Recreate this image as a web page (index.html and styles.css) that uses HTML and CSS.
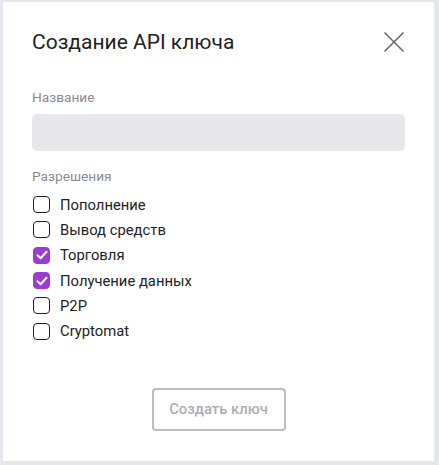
FILE: index.html
```html
<!DOCTYPE html>
<html lang="ru">
<head>
<meta charset="utf-8">
<title>Создание API ключа</title>
<link rel="stylesheet" href="styles.css">
</head>
<body>
<div class="modal">
  <div class="header">
    <h1 class="title">Создание API ключа</h1>
    <button class="close" aria-label="Закрыть">
      <svg width="22" height="22" viewBox="0 0 22 22"><path d="M1.5 1.5L20.5 20.5M20.5 1.5L1.5 20.5" stroke="#6a6a6a" stroke-width="1.6" fill="none"/></svg>
    </button>
  </div>
  <div class="field">
    <div class="label">Название</div>
    <div class="input"></div>
  </div>
  <div class="perms">
    <div class="label">Разрешения</div>
    <ul class="list">
      <li class="item"><span class="box"></span>Пополнение</li>
      <li class="item"><span class="box"></span>Вывод средств</li>
      <li class="item"><span class="box checked"><svg width="12" height="10" viewBox="0 0 12 10"><path d="M1.5 5.2L4.6 8.2L10.5 1.8" stroke="#fff" stroke-width="2" fill="none" stroke-linecap="round" stroke-linejoin="round"/></svg></span>Торговля</li>
      <li class="item"><span class="box checked"><svg width="12" height="10" viewBox="0 0 12 10"><path d="M1.5 5.2L4.6 8.2L10.5 1.8" stroke="#fff" stroke-width="2" fill="none" stroke-linecap="round" stroke-linejoin="round"/></svg></span>Получение данных</li>
      <li class="item"><span class="box"></span>P2P</li>
      <li class="item"><span class="box"></span>Cryptomat</li>
    </ul>
  </div>
  <div class="footer">
    <button class="submit">Создать ключ</button>
  </div>
</div>
</body>
</html>
```
FILE: styles.css
```css
html, body {
  margin: 0;
  padding: 0;
}
body {
  background: #e6e6ee;
  font-family: Roboto, "Liberation Sans", sans-serif;
  width: 439px;
  height: 465px;
  overflow: hidden;
}
.modal {
  box-sizing: border-box;
  margin: 2px 4px 0 3px;
  width: 431px;
  height: 459px;
  background: #fff;
  padding: 24px 29px 0 29px;
}
.header {
  display: flex;
  align-items: center;
  justify-content: space-between;
  height: 32px;
}
.title {
  margin: 0;
  font-size: 21px;
  font-weight: 400;
  color: #222;
}
.close {
  border: 0;
  background: none;
  padding: 0;
  width: 22px;
  height: 22px;
  display: flex;
}
.field {
  margin-top: 30px;
}
.label {
  font-size: 13.7px;
  color: #8a8a8f;
  line-height: 18px;
}
.input {
  margin-top: 8px;
  height: 37px;
  background: #e8e8ec;
  border-radius: 5px;
}
.perms {
  margin-top: 16px;
}
.list {
  list-style: none;
  margin: 7px 0 0 0;
  padding: 0;
}
.item {
  display: flex;
  align-items: center;
  height: 25.3px;
  font-size: 14.8px;
  color: #222;
}
.box {
  box-sizing: border-box;
  width: 17px;
  height: 17px;
  border: 1.6px solid #222;
  border-radius: 4px;
  margin: 0 10px 0 1px;
  display: flex;
  align-items: center;
  justify-content: center;
}
.box.checked {
  background: #9b3dd2;
  border-color: #9b3dd2;
}
.footer {
  display: flex;
  justify-content: center;
  margin-top: 44px;
}
.submit {
  box-sizing: border-box;
  width: 134px;
  height: 43px;
  border: 2px solid #bdbdc2;
  border-radius: 4px;
  background: #fff;
  color: #adadb3;
  font-family: Roboto, "Liberation Sans", sans-serif;
  font-size: 14.8px;
  font-weight: 500;
}
```
